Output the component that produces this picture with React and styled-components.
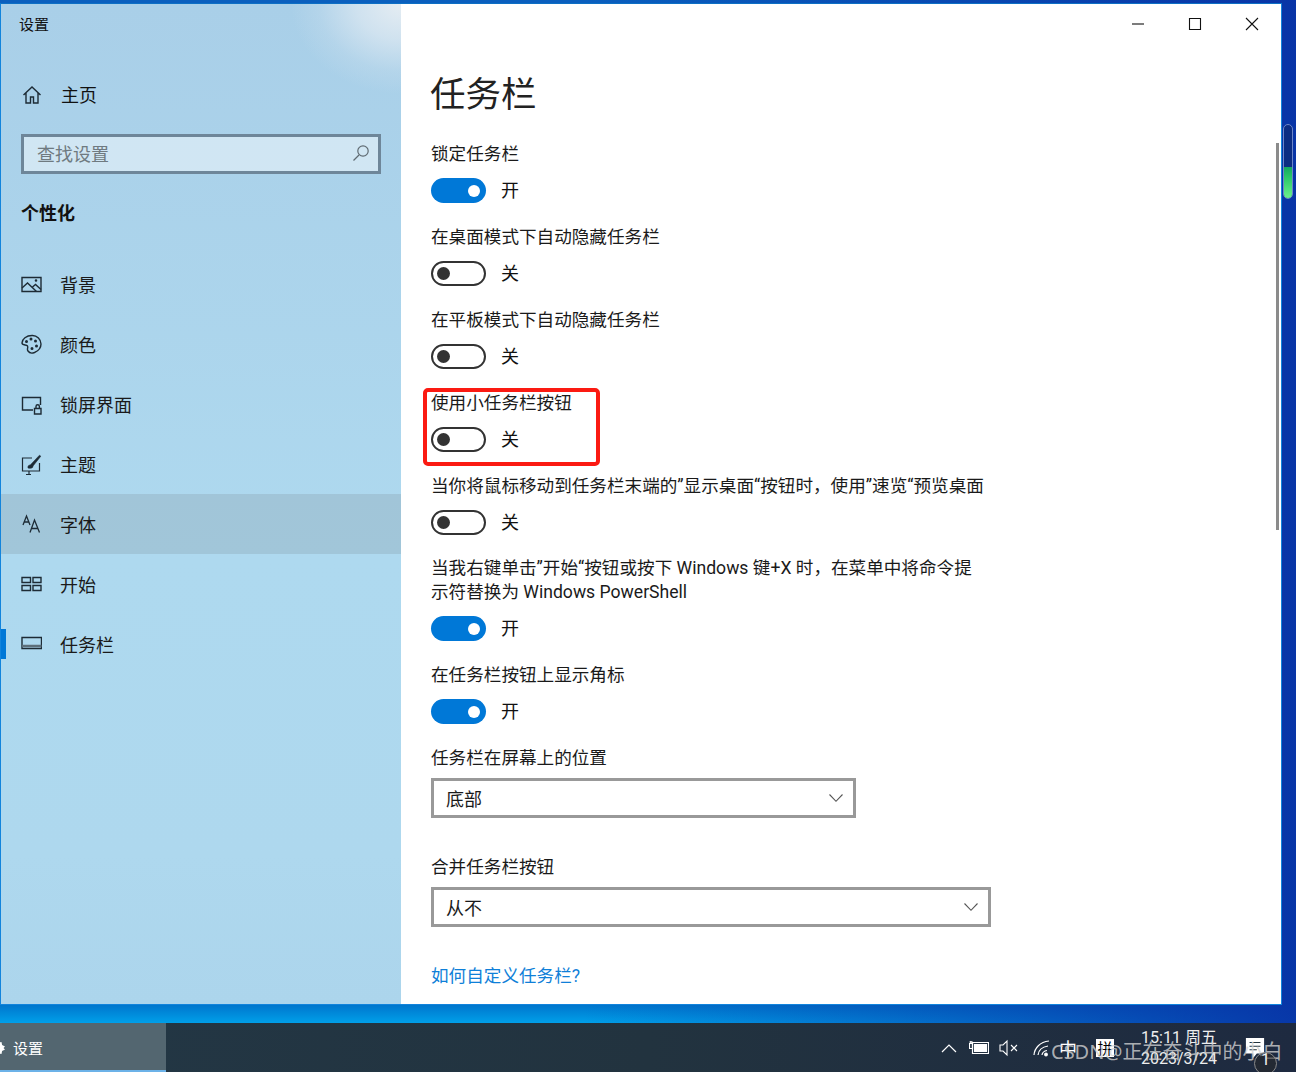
import React from 'react';
import styled, { createGlobalStyle } from 'styled-components';

const Global = createGlobalStyle`
  html, body { margin: 0; padding: 0; width: 1296px; height: 1072px; overflow: hidden; }
  * { box-sizing: border-box; }
  body { font-family: Roboto, "Noto Sans CJK SC", sans-serif; color: #111; }
`;

const Desktop = styled.div`
  position: relative; width: 1296px; height: 1072px; padding-top: 3px;
  display: flex; flex-direction: column; overflow: hidden;
  background:
    linear-gradient(90deg, rgba(8,50,165,0) 0%, rgba(8,50,165,0) 45%, rgba(8,50,165,.95) 100%),
    linear-gradient(180deg, #0a5fbe 0%, #0072ca 93.6%, #00a4ec 95.6%);
`;
const Window = styled.div`
  width: 1282px; height: 1002px; flex: none; display: flex;
  border: 1px solid #1284dc; border-top-color: #0d6fc4; background: #fff;
`;
const Sidebar = styled.aside`
  width: 400px; flex: none; display: flex; flex-direction: column;
  background:
    radial-gradient(ellipse 110px 90px at 400px 0px, rgba(232,238,243,.95) 0%, rgba(222,233,242,.72) 40%, rgba(205,224,238,.3) 75%, rgba(200,222,238,0) 100%),
    linear-gradient(180deg, #a9cfe8 0%, #aed9ef 55%, #aed8ee 85%, #acd5ec 100%);
`;
const AppTitle = styled.div`
  font-size: 15px; line-height: 20px; padding: 11px 0 0 18px; height: 45px; color: #111;
`;
const HomeRow = styled.div`
  display: flex; align-items: center; height: 60px; margin-top: 16px; padding: 2px 0 0 21px; font-size: 18px; line-height: 24px;
  svg { width: 20px; height: 20px; margin: -2px 19px 0 0; flex: none; }
`;
const SearchBox = styled.div`
  width: 360px; height: 40px; margin: 9px 0 0 20px; display: flex; align-items: center; justify-content: space-between;
  padding: 0 8px 2px 13px; border: 3px solid #6e8699; background: rgba(255,255,255,.45);
  font-size: 18px; color: #6f7a80;
  svg { width: 18px; height: 18px; }
`;
const SectionTitle = styled.div`
  font-size: 18px; font-weight: 700; line-height: 24px; padding-left: 20px; margin: 28px 0 28px;
`;
const NavItem = styled.div`
  position: relative; height: 60px; display: flex; align-items: center; padding: 4px 0 0 20px;
  font-size: 18px; line-height: 24px; color: #1a1a1a;
  background: ${p => (p.$hover ? 'rgba(120,130,140,.22)' : 'transparent')};
  svg { width: 21px; height: 21px; margin: -4px 18px 0 0; flex: none; }
`;
const Indicator = styled.span`
  position: absolute; left: 0; top: 15px; width: 5px; height: 30px; background: #0078d7;
`;
const Main = styled.main`
  flex: 1; min-width: 0; display: flex; flex-direction: column; padding-left: 30px; position: relative;
`;
const Controls = styled.div`
  display: flex; justify-content: flex-end; height: 39px; flex: none; padding-right: 1px;
`;
const CtlBtn = styled.div`
  width: 57px; height: 39px; display: flex; align-items: center; justify-content: center;
  svg { width: 14px; height: 14px; }
`;
const PageTitle = styled.h1`
  margin: 27px 0 21px -1px; font-size: 35.5px; line-height: 50px; font-weight: 400; color: #222;
`;
const Setting = styled.section`
  margin-bottom: ${p => (p.$tight ? 20 : 21)}px; width: 555px;
`;
const Label = styled.div`
  font-size: 17.6px; line-height: 24px; padding-top: 1px; color: #1a1a1a;
`;
const ToggleRow = styled.div`
  display: flex; align-items: center; margin-top: 12px; height: 25px; font-size: 18px; line-height: 25px; gap: 15px;
`;
const Track = styled.span`
  width: 55px; height: 25px; border-radius: 13px; display: flex; align-items: center; flex: none;
  justify-content: ${p => (p.$on ? 'flex-end' : 'flex-start')};
  padding: 0 ${p => (p.$on ? '6px' : '4px')};
  background: ${p => (p.$on ? '#0078d7' : 'transparent')};
  border: ${p => (p.$on ? '0' : '2.5px solid #333')};
`;
const Knob = styled.span`
  width: ${p => (p.$on ? 12 : 13)}px; height: ${p => (p.$on ? 12 : 13)}px; border-radius: 50%;
  background: ${p => (p.$on ? '#fff' : '#333')};
`;
const Select = styled.div`
  width: ${p => p.$w}px; height: 40px; margin-top: 8px; border: 3px solid #999;
  display: flex; align-items: center; justify-content: space-between; padding: 0 9px 0 12px;
  font-size: 18px; color: #1a1a1a;
  svg { width: 16px; height: 10px; }
`;
const SelectGroup = styled.section`
  margin-bottom: 36px;
`;
const HelpLink = styled.a`
  font-size: 17.6px; line-height: 24px; padding-top: 1px; color: #0f7fd8; text-decoration: none;
`;
const Scroll = styled.div`
  position: absolute; right: 2px; top: 139px; width: 3px; height: 387px; background: #8b8b8b;
`;
const Meter = styled.div`
  position: absolute; left: 1283px; top: 124px; width: 10px; height: 75px; border-radius: 5px;
  border: 1px solid #6c86c8; background: #0b2c82; overflow: hidden; display: flex; align-items: flex-end;
`;
const MeterFill = styled.div`
  width: 100%; height: 31px; background: linear-gradient(180deg, #12a860 0%, #2cc86a 35%, #6cf08c 100%);
`;
const Callout = styled.div`
  position: absolute; left: 423px; top: 388px; width: 177px; height: 78px;
  border: 4px solid #fb1a12; border-radius: 5px;
`;
const Taskbar = styled.footer`
  margin-top: auto; height: 49px; flex: none; display: flex; align-items: stretch;
  background: linear-gradient(90deg, #233745 0%, #22333f 50%, #1e2a40 100%); color: #fff;
`;
const ActiveTask = styled.div`
  width: 166px; display: flex; align-items: center; padding: 2px 0 0 13px; font-size: 15px;
  background: #536670; border-bottom: 2px solid #6cb2e8; position: relative;
  svg { position: absolute; left: -11px; top: 17px; width: 16px; height: 16px; }
`;
const Tray = styled.div`
  margin-left: auto; display: flex; align-items: center; padding-right: 31px;
`;
const TrayIcon = styled.span`
  display: flex; align-items: center; justify-content: center; margin-left: ${p => p.$ml}px; width: ${p => p.$w}px; height: 24px;
  font-size: 18px; color: #fff; font-family: "Noto Sans CJK SC", sans-serif;
  svg { width: 100%; height: 20px; }
`;
const ImeBox = styled.span`
  display: flex; align-items: center; justify-content: center; width: 18px; height: 18px; margin-left: 18px;
  background: #fff; color: #000; font-size: 15px; font-family: "Noto Sans CJK SC", sans-serif;
`;
const Clock = styled.div`
  margin-left: 26px; width: 78px; text-align: center; font-size: 16px; line-height: 21px; color: #eee; white-space: nowrap;
`;
const Watermark = styled.div`
  position: absolute; left: 1051px; top: 1037px; font-family: "Noto Sans", "Noto Sans CJK SC", sans-serif;
  font-size: 20px; line-height: 30px; white-space: nowrap; color: rgba(210,210,210,.8);
`;
const Badge = styled.div`
  position: absolute; left: 1254px; top: 1052px; width: 23px; height: 23px; border-radius: 50%;
  border: 1px solid #8a8a8a; background: rgba(40,40,40,.55); color: #eee; font-size: 16px; line-height: 13px; text-align: center;
`;

const S = { fill: 'none', stroke: '#1d2b35', strokeWidth: 1.4 };
const Home = () => <svg viewBox="0 0 20 20" {...S}><path d="M1.5 10 10 2l8.5 8M4 8v10h4.5v-6h3v6H16V8" /></svg>;
const Search = () => <svg viewBox="0 0 18 18" fill="none" stroke="#5f6b72" strokeWidth="1.2"><circle cx="11" cy="7" r="5.2" /><path d="M7 11 1.5 16.5" /></svg>;
const Pic = () => <svg viewBox="0 0 21 21" {...S}><path d="M1 3.5h19v14H1z" /><path d="M1 14l5.5-5 9 8.5M11.500 13l3-2.500 5.500 5" /><circle cx="15" cy="6.5" r=".6" /></svg>;
const Palette = () => <svg viewBox="0 0 21 21" {...S}><path d="M11 1.5C5.5 1.5 1 5 1 9c0 2.5 4.5 1.5 5.5 3 1 1.6-1 3 .5 5 1.3 2 4 2.5 6.5 1.5 3.5-1.5 6.5-4.5 6.5-8.5 0-4.500-4-8.500-8.500-8.500z" /><circle cx="5.5" cy="7.5" r=".8" /><circle cx="10" cy="5" r=".8" /><circle cx="14.5" cy="7" r=".8" /><circle cx="15.5" cy="12" r=".8" /><circle cx="11" cy="14.5" r=".8" /></svg>;
const Lock = () => <svg viewBox="0 0 21 21" {...S}><path d="M12 16H1.5V3.500h18V11" /><path d="M13.500 14.500h6.500v5.500h-6.500zM15 14.500v-2a1.700 1.700 0 0 1 3.400 0v2" /></svg>;
const Theme = () => <svg viewBox="0 0 21 21" {...S} strokeWidth="1.2"><path d="M11 4H1.500v13h17V9M10 20.500H5M8 17v3.500" /><path d="M7 14c-.3-1.800.5-3 2.300-3L18.500 1.200l1.300 1L12 12c.2 1.800-1.800 2.800-5 2z" fill="#1d2b35" strokeWidth=".6" /></svg>;
const Font = () => <svg viewBox="0 0 21 21" {...S} strokeWidth="1.3"><path d="M2 11 5.500 2 9 11M3.200 8h4.600M9 18.500 13.500 6l5 12.500M10.600 14.500h6.400" /></svg>;
const Start = () => <svg viewBox="0 0 21 21" {...S}><path d="M1 3.500h8.500v5H1zM12 3.500h8v5h-8zM1 11.500h8.500v5H1zM12 11.500h8v5h-8z" /></svg>;
const Bar = () => <svg viewBox="0 0 21 21" {...S}><path d="M1 3.500h19.500v11H1z" /><path d="M1 12h19.500" stroke="#5d6f7a" strokeWidth="2.500" /></svg>;
const Chevron = () => <svg viewBox="0 0 16 10" fill="none" stroke="#555" strokeWidth="1.1"><path d="M1.500 1.500 8 8.300l6.500-6.800" /></svg>;
const C = { fill: 'none', stroke: '#111', strokeWidth: 1.1 };

const Toggle = ({ on }) => (
  <ToggleRow>
    <Track $on={on}><Knob $on={on} /></Track>
    <span>{on ? '开' : '关'}</span>
  </ToggleRow>
);

const settings = [
  ['锁定任务栏', true],
  ['在桌面模式下自动隐藏任务栏', false],
  ['在平板模式下自动隐藏任务栏', false],
  ['使用小任务栏按钮', false],
  ['当你将鼠标移动到任务栏末端的”显示桌面“按钮时，使用”速览“预览桌面', false, true],
  ['当我右键单击”开始“按钮或按下 Windows 键+X 时，在菜单中将命令提示符替换为 Windows PowerShell', true],
  ['在任务栏按钮上显示角标', true],
];
const nav = [
  ['背景', Pic], ['颜色', Palette], ['锁屏界面', Lock], ['主题', Theme], ['字体', Font], ['开始', Start], ['任务栏', Bar],
];

export default function App() {
  return (
    <Desktop>
      <Global />
      <Window>
        <Sidebar>
          <AppTitle>设置</AppTitle>
          <HomeRow><Home />主页</HomeRow>
          <SearchBox>查找设置<Search /></SearchBox>
          <SectionTitle>个性化</SectionTitle>
          {nav.map(([t, I]) => (
            <NavItem key={t} $hover={t === '字体'}>
              {t === '任务栏' && <Indicator />}
              <I />{t}
            </NavItem>
          ))}
        </Sidebar>
        <Main>
          <Controls>
            <CtlBtn><svg viewBox="0 0 14 14" {...C}><path d="M1 7h12" /></svg></CtlBtn>
            <CtlBtn><svg viewBox="0 0 14 14" {...C}><path d="M1.500 1.500h11v11h-11z" /></svg></CtlBtn>
            <CtlBtn><svg viewBox="0 0 14 14" {...C}><path d="M1 1l12 12M13 1 1 13" /></svg></CtlBtn>
          </Controls>
          <PageTitle>任务栏</PageTitle>
          {settings.map(([t, on, tight]) => (
            <Setting key={t} $tight={tight}>
              <Label>{t}</Label>
              <Toggle on={on} />
            </Setting>
          ))}
          <SelectGroup>
            <Label>任务栏在屏幕上的位置</Label>
            <Select $w={425}>底部<Chevron /></Select>
          </SelectGroup>
          <SelectGroup>
            <Label>合并任务栏按钮</Label>
            <Select $w={560}>从不<Chevron /></Select>
          </SelectGroup>
          <HelpLink href="#">如何自定义任务栏?</HelpLink>
          <Scroll />
        </Main>
      </Window>
      <Taskbar>
        <ActiveTask>
          <svg viewBox="0 0 16 16" fill="#fff"><path d="M8 0l1.500 2.500 3-.6.6 3L16 6.500 14.500 8 16 9.500l-2.900 1.600-.6 3-3-.6L8 16l-1.500-2.500-3 .6-.6-3L0 9.500 1.500 8 0 6.500l2.900-1.600.6-3 3 .6z" /></svg>
          设置
        </ActiveTask>
        <Tray>
          <TrayIcon $ml={0} $w={16}><svg viewBox="0 0 16 20" fill="none" stroke="#fff" strokeWidth="1.2"><path d="M1 14l7-7 7 7" /></svg></TrayIcon>
          <TrayIcon $ml={12} $w={20}><svg viewBox="0 0 20 20" fill="none" stroke="#fff" strokeWidth="1.2"><path d="M3.500 4.500h16v11h-16z" /><path d="M5 6h13v8H5z" fill="#fff" stroke="none" /><path d="M.5 5.500h3v5h-3zM1.300 3v2.500M2.800 3v2.500" /></svg></TrayIcon>
          <TrayIcon $ml={10} $w={19}><svg viewBox="0 0 19 20" fill="none" stroke="#fff" strokeWidth="1.1"><path d="M1 7h3l4-4v14l-4-4H1zM12 7l6 6M18 7l-6 6" /></svg></TrayIcon>
          <TrayIcon $ml={15} $w={18}><svg viewBox="0 0 18 20" fill="none" stroke="#fff" strokeWidth="1.2"><path d="M1 17C1.500 10 7 4 16 3M5 17c.5-4.500 4-8 10-9M9 17c.3-2 2-4 5-4.500" /><circle cx="13" cy="16.500" r="1.300" fill="#fff" /></svg></TrayIcon>
          <TrayIcon $ml={7} $w={20}>中</TrayIcon>
          <ImeBox>拼</ImeBox>
          <Clock>15:11 周五<br />2023/3/24</Clock>
          <TrayIcon $ml={27} $w={20}><svg viewBox="0 0 20 22" fill="#fff"><path d="M0 0h20v17h-8l-4 5v-5H0z" /><path d="M4 5h12M4 9h12M4 13h8" stroke="#22333f" strokeWidth="1.200" /></svg></TrayIcon>
        </Tray>
      </Taskbar>
      <Meter><MeterFill /></Meter>
      <Callout />
      <Watermark>CSDN@正在奋斗中的小白</Watermark>
      <Badge>1</Badge>
    </Desktop>
  );
}
